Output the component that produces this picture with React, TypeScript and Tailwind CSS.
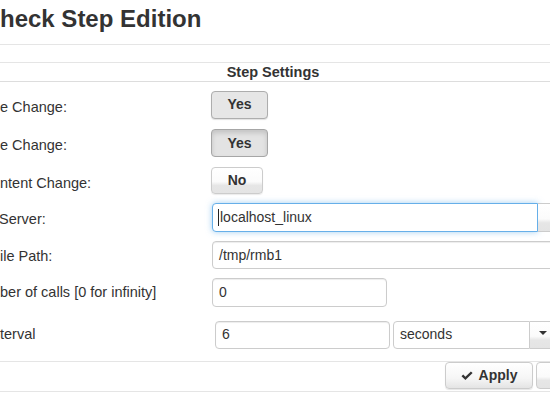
import React from 'react';

const btnGradient =
  'bg-[linear-gradient(to_bottom,#ffffff_0%,#fbfbfb_55%,#e6e6e6_70%,#e4e4e4_100%)]';

function Row({
  label,
  labelClass = '',
  rowClass,
  children,
}: {
  label: string;
  labelClass?: string;
  rowClass: string;
  children: React.ReactNode;
}) {
  return (
    <div className={`flex items-center ${rowClass}`}>
      <div className={`w-[211px] shrink-0 text-[14.5px] whitespace-nowrap ${labelClass}`}>
        {label}
      </div>
      {children}
    </div>
  );
}

function TextBox({ value, className }: { value: string; className: string }) {
  return (
    <div
      className={`flex items-center border border-[#cccccc] rounded-[4px] bg-white px-[6px] text-[14px] text-[#333] shadow-[inset_0_1px_1px_rgba(0,0,0,0.075)] ${className}`}
    >
      {value}
    </div>
  );
}

export default function App() {
  return (
    <div className="w-[550px] h-[400px] overflow-hidden bg-white text-[#333] font-['Liberation_Sans',Arial,sans-serif]">
      <div className="w-[600px]">
        {/* Title */}
        <div className="h-[45px] border-b border-[#e5e5e5] pt-[5px]">
          <h1 className="text-[24px] font-bold leading-[28px] whitespace-nowrap">heck Step Edition</h1>
        </div>
        <div className="h-[18px] border-b border-[#e5e5e5]"></div>
        <div className="h-[19px] border-b border-[#dddddd]">
          <div className="w-[546px] text-center text-[14.5px] font-bold leading-[19px]">Step Settings</div>
        </div>

        <div className="pt-[3px]">
          <Row label="e Change:" rowClass="h-[39px]" labelClass="pt-[7px]">
            <div className="w-[57px] h-[28px] flex items-center justify-center rounded-[4px] border border-[#adadad] bg-[#e6e6e6] text-[14px] font-bold shadow-[0_1px_1px_rgba(0,0,0,0.12)]">
              Yes
            </div>
          </Row>
          <Row label="e Change:" rowClass="h-[38px]" labelClass="pt-[6px]">
            <div className="w-[57px] h-[28px] flex items-center justify-center rounded-[4px] border border-[#a6a6a6] bg-[#e3e3e3] text-[14px] font-bold shadow-[inset_0_3px_5px_rgba(0,0,0,0.14)]">
              Yes
            </div>
          </Row>
          <Row label="ntent Change:" rowClass="h-[37px]" labelClass="pt-[6px]">
            <div className={`w-[52px] h-[27px] flex items-center justify-center rounded-[4px] border border-[#cccccc] ${btnGradient} text-[14px] font-bold shadow-[0_1px_1px_rgba(0,0,0,0.08)]`}>
              No
            </div>
          </Row>
          <Row label="Server:" rowClass="h-[37px]" labelClass="pt-[5px] -ml-[1px]">
            <div className="flex ml-[2px]">
              <div className="w-[326px] h-[29px] flex items-center rounded-l-[4px] border border-[#66afe9] bg-white pl-[5px] text-[14px] text-[#333] shadow-[0_0_6px_rgba(102,175,233,0.6)]">
                <span className="w-[1px] h-[17px] bg-[#222] mr-[1px]"></span>
                localhost_linux
              </div>
              <div className={`w-[30px] h-[29px] rounded-r-[4px] border border-l-0 border-[#cccccc] ${btnGradient}`}></div>
            </div>
          </Row>
          <Row label="ile Path:" rowClass="h-[38px]" labelClass="pt-[4px]">
            <TextBox value="/tmp/rmb1" className="ml-[1px] w-[356px] h-[28px]" />
          </Row>
          <Row label="ber of calls [0 for infinity]" rowClass="h-[37px]">
            <TextBox value="0" className="ml-[1px] w-[175px] h-[29px]" />
          </Row>
          <Row label="terval" rowClass="h-[47px]">
            <TextBox value="6" className="ml-[4px] w-[175px] h-[28px]" />
            <div className="flex ml-[3px]">
              <div className="w-[137px] h-[28px] flex items-center rounded-l-[4px] border border-[#cccccc] bg-white pl-[6px] text-[14px] text-[#333]">
                seconds
              </div>
              <div className={`w-[26px] h-[28px] flex items-center justify-center rounded-r-[4px] border border-l-0 border-[#cccccc] ${btnGradient}`}>
                <span className="w-0 h-0 border-x-[4px] border-x-transparent border-t-[4px] border-t-[#333] -mt-[4px]"></span>
              </div>
            </div>
          </Row>
        </div>

        {/* Footer */}
        <div className="mt-[3px] h-[31px] border-y border-[#e5e5e5] flex justify-end items-start pr-[4px]">
          <div className="w-[88px] h-[27px] flex items-center justify-center gap-[6px] rounded-[4px] border border-[#cccccc] bg-[linear-gradient(to_bottom,#ffffff_0%,#f6f6f6_60%,#e4e4e4_100%)] text-[14px] font-bold shadow-[0_1px_1px_rgba(0,0,0,0.1)]">
            <svg width="12" height="10" viewBox="0 0 12 10">
              <path d="M0.5 5.2 L2.2 3.6 L4.4 5.7 L9.9 0.4 L11.6 2 L4.4 8.9 Z" fill="#333" />
            </svg>
            Apply
          </div>
          <div className={`ml-[3px] w-[60px] h-[27px] rounded-[4px] border border-[#cccccc] ${btnGradient}`}></div>
        </div>
      </div>
    </div>
  );
}
